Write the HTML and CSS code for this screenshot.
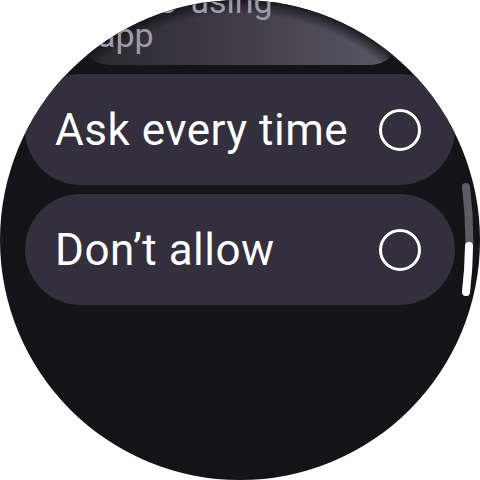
FILE: index.html
```html
<!DOCTYPE html>
<html>
<head>
<meta charset="utf-8">
<link rel="stylesheet" href="styles.css">
</head>
<body>
<div class="watch">
  <div class="list">
    <div class="card-top">
      <div class="card-text">while using<br>app</div>
    </div>
    <div class="chip">
      <span class="label">Ask every time</span>
      <span class="radio"></span>
    </div>
    <div class="chip">
      <span class="label">Don’t allow</span>
      <span class="radio"></span>
    </div>
  </div>
  <svg class="scroll" width="480" height="480" viewBox="0 0 480 480">
    <path d="M 466 187 A 416 416 0 0 1 466 292" fill="none" stroke="#5d5c63" stroke-width="8" stroke-linecap="round"/>
    <path d="M 469 246 A 416 416 0 0 1 466 292" fill="none" stroke="#ffffff" stroke-width="8" stroke-linecap="round"/>
  </svg>
</div>
</body>
</html>
```
FILE: styles.css
```css
html, body {
  margin: 0;
  padding: 0;
  background: #ffffff;
}
.watch {
  position: relative;
  width: 480px;
  height: 480px;
  border-radius: 50%;
  overflow: hidden;
  background: #141318;
  font-family: Roboto, "Noto Sans", sans-serif;
}
.list {
  display: flex;
  flex-direction: column;
  gap: 9px;
  padding: 0 25px;
  margin-top: -46px;
}
.card-top {
  align-self: center;
  width: 318px;
  height: 111px;
  box-sizing: border-box;
  border-radius: 28px;
  background:
    radial-gradient(circle 240px at 159px 286px, rgba(20,19,24,0) 226px, rgba(20,19,24,0.85) 240px),
    linear-gradient(90deg, #2a2830 0%, #3b3843 40%, #5c5866 100%);
  padding: 30px 0 0 16px;
}
.card-text {
  color: #9e9ca4;
  font-size: 34px;
  line-height: 34px;
  font-weight: 400;
  word-spacing: 6px;
}
.chip {
  height: 111px;
  border-radius: 56px;
  background: #332f3c;
  display: flex;
  align-items: center;
  justify-content: space-between;
  padding: 0 34px 0 30px;
}
.label {
  color: #ffffff;
  font-size: 44px;
  font-weight: 400;
  letter-spacing: 0.5px;
}
.radio {
  width: 36px;
  height: 36px;
  border: 3.5px solid #ffffff;
  border-radius: 50%;
}
.scroll {
  position: absolute;
  left: 0;
  top: 0;
}
```
